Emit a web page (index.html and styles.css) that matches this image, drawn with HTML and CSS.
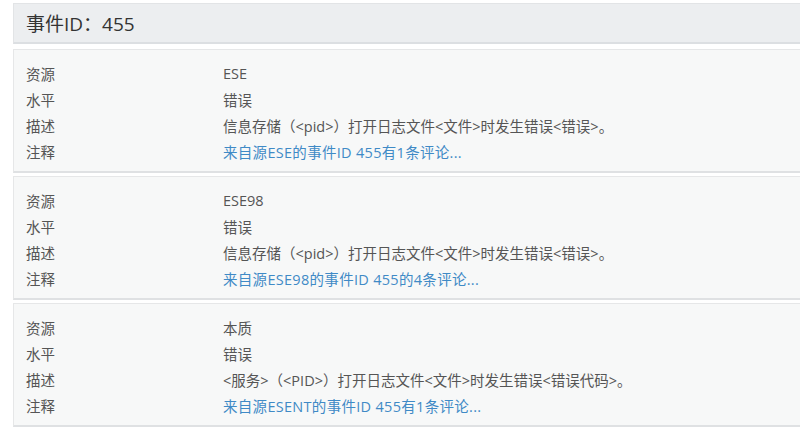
FILE: index.html
```html
<!DOCTYPE html>
<html lang="zh">
<head>
<meta charset="utf-8">
<link rel="stylesheet" href="styles.css">
</head>
<body>
<div class="page">
  <div class="header">事件ID：455</div>
  <div class="card">
    <div class="row"><span class="label">资源</span><span class="value">ESE</span></div>
    <div class="row"><span class="label">水平</span><span class="value">错误</span></div>
    <div class="row"><span class="label">描述</span><span class="value">信息存储（&lt;pid&gt;）打开日志文件&lt;文件&gt;时发生错误&lt;错误&gt;。</span></div>
    <div class="row"><span class="label">注释</span><a class="value link" href="#">来自源ESE的事件ID 455有1条评论...</a></div>
  </div>
  <div class="card">
    <div class="row"><span class="label">资源</span><span class="value">ESE98</span></div>
    <div class="row"><span class="label">水平</span><span class="value">错误</span></div>
    <div class="row"><span class="label">描述</span><span class="value">信息存储（&lt;pid&gt;）打开日志文件&lt;文件&gt;时发生错误&lt;错误&gt;。</span></div>
    <div class="row"><span class="label">注释</span><a class="value link" href="#">来自源ESE98的事件ID 455的4条评论...</a></div>
  </div>
  <div class="card">
    <div class="row"><span class="label">资源</span><span class="value">本质</span></div>
    <div class="row"><span class="label">水平</span><span class="value">错误</span></div>
    <div class="row"><span class="label">描述</span><span class="value">&lt;服务&gt;（&lt;PID&gt;）打开日志文件&lt;文件&gt;时发生错误&lt;错误代码&gt;。</span></div>
    <div class="row"><span class="label">注释</span><a class="value link" href="#">来自源ESENT的事件ID 455有1条评论...</a></div>
  </div>
</div>
</body>
</html>
```

FILE: styles.css
```css
html, body {
  margin: 0;
  padding: 0;
  background: #ffffff;
  overflow: hidden;
}
body {
  font-family: "Open Sans", "Noto Sans CJK SC", sans-serif;
  color: #444;
}
.page {
  width: 820px;
  padding: 3px 0 0 13px;
  display: flex;
  flex-direction: column;
  gap: 3px;
}
.header {
  height: 41px;
  box-sizing: border-box;
  background: #eceef0;
  border: 1px solid #e2e4e6;
  border-bottom: 2px solid #dcdfe2;
  padding: 0 12px;
  display: flex;
  align-items: center;
  font-size: 19px;
  color: #333;
  margin-bottom: 2px;
}
.card {
  background: #f7f8f8;
  border: 1px solid #e6e7e8;
  border-bottom: 2px solid #dfe1e3;
  padding: 10px 12px 7px 12px;
  display: flex;
  flex-direction: column;
}
.row {
  display: flex;
  height: 26px;
  align-items: center;
  font-size: 14.5px;
}
.label {
  width: 197px;
  flex: none;
  color: #555;
}
.value {
  color: #555;
}
.link {
  color: #3f8ac6;
  text-decoration: none;
  letter-spacing: 0.3px;
}
```
